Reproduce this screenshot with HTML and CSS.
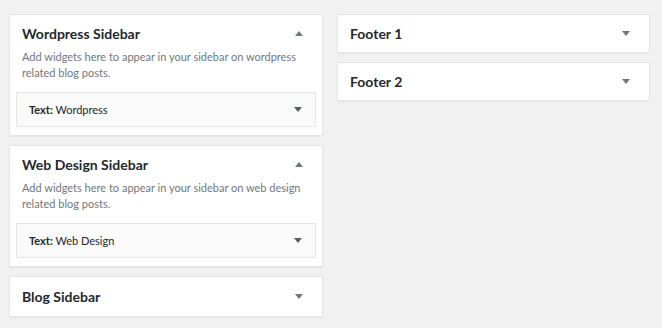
FILE: index.html
```html
<!DOCTYPE html>
<html lang="en">
<head>
  <meta charset="UTF-8">
  <meta name="viewport" content="width=device-width, initial-scale=1.0">
  <title>Widgets</title>
  <link rel="stylesheet" href="styles.css">
</head>
<body>
  <div class="widgets">
    <!-- Left column -->
    <div class="column column-left">
      <div class="sidebar open">
        <div class="sidebar-head">
          <h2>Wordpress Sidebar</h2>
          <span class="toggle up"></span>
        </div>
        <p class="description">Add widgets here to appear in your sidebar on wordpress related blog posts.</p>
        <div class="widget">
          <span class="widget-title"><b>Text:</b> Wordpress</span>
          <span class="toggle"></span>
        </div>
      </div>

      <div class="sidebar open">
        <div class="sidebar-head">
          <h2>Web Design Sidebar</h2>
          <span class="toggle up"></span>
        </div>
        <p class="description">Add widgets here to appear in your sidebar on web design related blog posts.</p>
        <div class="widget">
          <span class="widget-title"><b>Text:</b> Web Design</span>
          <span class="toggle"></span>
        </div>
      </div>

      <div class="sidebar">
        <div class="sidebar-head">
          <h2>Blog Sidebar</h2>
          <span class="toggle"></span>
        </div>
      </div>
    </div>

    <!-- Right column -->
    <div class="column column-right">
      <div class="sidebar">
        <div class="sidebar-head">
          <h2>Footer 1</h2>
          <span class="toggle"></span>
        </div>
      </div>
      <div class="sidebar">
        <div class="sidebar-head">
          <h2>Footer 2</h2>
          <span class="toggle"></span>
        </div>
      </div>
    </div>
  </div>
</body>
</html>
```

FILE: styles.css
```css
/* General Styles */
body {
  margin: 0;
  background: #f1f1f1;
  font-family: Lato, "Open Sans", sans-serif;
  color: #23282d;
}

.widgets {
  display: flex;
  gap: 14px;
  padding: 14px 0 0 9px;
}

.column-left {
  width: 314px;
}

.column-right {
  width: 313px;
}

/* Sidebar boxes */
.sidebar {
  background: #fff;
  border: 1px solid #e5e5e5;
  box-shadow: 0 1px 1px rgba(0, 0, 0, 0.04);
  margin-bottom: 9px;
}

.sidebar.open {
  padding-bottom: 8px;
}

.sidebar-head {
  display: flex;
  align-items: center;
  justify-content: space-between;
  height: 37px;
  padding: 0 19px 0 12px;
}

.sidebar-head h2 {
  margin: 0;
  font-size: 14px;
  font-weight: 700;
  color: #23282d;
}

.column-left .sidebar:last-child .sidebar-head {
  height: 39px;
}

.description {
  margin: -3px 12px 11px;
  font-size: 11px;
  line-height: 16px;
  color: #72777c;
}

/* Widget rows */
.widget {
  display: flex;
  align-items: center;
  justify-content: space-between;
  height: 33px;
  margin: 0 6px;
  padding: 0 13px 0 12px;
  background: #fafafa;
  border: 1px solid #e5e5e5;
}

.widget-title {
  font-size: 11px;
  color: #23282d;
}

.widget-title b {
  font-weight: 700;
}

/* Arrow toggles */
.toggle {
  width: 0;
  height: 0;
  border-left: 4px solid transparent;
  border-right: 4px solid transparent;
  border-top: 5px solid #72777c;
}

.toggle.up {
  border-top: 0;
  border-bottom: 5px solid #72777c;
}

.widget .toggle {
  border-top-color: #555d66;
}
```
